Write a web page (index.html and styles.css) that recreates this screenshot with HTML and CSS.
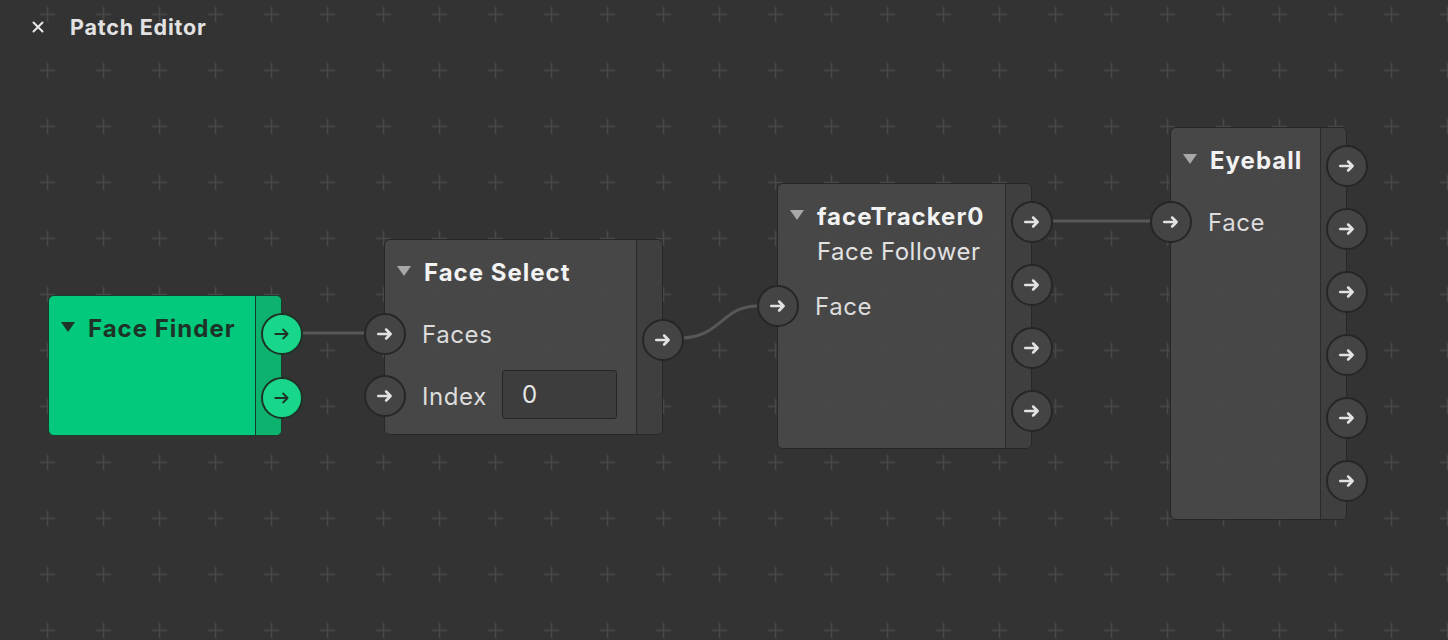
FILE: index.html
```html
<!DOCTYPE html>
<html>
<head>
<meta charset="utf-8">
<link rel="stylesheet" href="styles.css">
</head>
<body>
<div class="canvas">
  <svg class="wires" width="1448" height="640" viewBox="0 0 1448 640">
    <defs>
      <pattern id="plus" x="19" y="42" width="56" height="56" patternUnits="userSpaceOnUse">
        <path d="M21 28.5H36M28.5 21V36" stroke="#474747" stroke-width="1.6"/>
      </pattern>
    </defs>
    <rect width="1448" height="640" fill="url(#plus)"/>
    <path d="M303 333H364" stroke="#575757" stroke-width="3" fill="none"/>
    <path d="M683 338C722 336 722 306 758 306" stroke="#575757" stroke-width="3" fill="none"/>
    <path d="M1052 221H1150" stroke="#575757" stroke-width="3" fill="none"/>
  </svg>

  <section class="node green" style="left:48px;top:295px;width:234px;height:141px">
    <div class="body">
      <div class="title"><span class="tri"></span>Face Finder</div>
    </div>
    <div class="side"></div>
    <div class="outs gap64">
      <span class="port"><svg viewBox="0 0 16 16"><path d="M2 8H13M9 4L13 8L9 12"/></svg></span>
      <span class="port"><svg viewBox="0 0 16 16"><path d="M2 8H13M9 4L13 8L9 12"/></svg></span>
    </div>
  </section>

  <section class="node" style="left:384px;top:239px;width:279px;height:196px">
    <div class="body">
      <div class="title"><span class="tri"></span>Face Select</div>
      <div class="row"><span class="port"><svg viewBox="0 0 16 16"><path d="M2 8H13M9 4L13 8L9 12"/></svg></span><span class="label">Faces</span></div>
      <div class="row"><span class="port"><svg viewBox="0 0 16 16"><path d="M2 8H13M9 4L13 8L9 12"/></svg></span><span class="label">Index</span><span class="field">0</span></div>
    </div>
    <div class="side"></div>
    <div class="outs" style="top:79px">
      <span class="port"><svg viewBox="0 0 16 16"><path d="M2 8H13M9 4L13 8L9 12"/></svg></span>
    </div>
  </section>

  <section class="node" style="left:777px;top:183px;width:255px;height:266px">
    <div class="body">
      <div class="title"><span class="tri"></span>faceTracker0</div>
      <div class="sub">Face Follower</div>
      <div class="row short"><span class="port"><svg viewBox="0 0 16 16"><path d="M2 8H13M9 4L13 8L9 12"/></svg></span><span class="label">Face</span></div>
    </div>
    <div class="side"></div>
    <div class="outs">
      <span class="port"><svg viewBox="0 0 16 16"><path d="M2 8H13M9 4L13 8L9 12"/></svg></span>
      <span class="port"><svg viewBox="0 0 16 16"><path d="M2 8H13M9 4L13 8L9 12"/></svg></span>
      <span class="port"><svg viewBox="0 0 16 16"><path d="M2 8H13M9 4L13 8L9 12"/></svg></span>
      <span class="port"><svg viewBox="0 0 16 16"><path d="M2 8H13M9 4L13 8L9 12"/></svg></span>
    </div>
  </section>

  <section class="node" style="left:1170px;top:127px;width:177px;height:393px">
    <div class="body">
      <div class="title"><span class="tri"></span>Eyeball</div>
      <div class="row"><span class="port"><svg viewBox="0 0 16 16"><path d="M2 8H13M9 4L13 8L9 12"/></svg></span><span class="label">Face</span></div>
    </div>
    <div class="side"></div>
    <div class="outs">
      <span class="port"><svg viewBox="0 0 16 16"><path d="M2 8H13M9 4L13 8L9 12"/></svg></span>
      <span class="port"><svg viewBox="0 0 16 16"><path d="M2 8H13M9 4L13 8L9 12"/></svg></span>
      <span class="port"><svg viewBox="0 0 16 16"><path d="M2 8H13M9 4L13 8L9 12"/></svg></span>
      <span class="port"><svg viewBox="0 0 16 16"><path d="M2 8H13M9 4L13 8L9 12"/></svg></span>
      <span class="port"><svg viewBox="0 0 16 16"><path d="M2 8H13M9 4L13 8L9 12"/></svg></span>
      <span class="port"><svg viewBox="0 0 16 16"><path d="M2 8H13M9 4L13 8L9 12"/></svg></span>
    </div>
  </section>
</div>

<header class="topbar">
  <svg class="close" width="12" height="12" viewBox="0 0 12 12"><path d="M1.5 1.5L10.5 10.5M10.5 1.5L1.5 10.5"/></svg>
  <h1>Patch Editor</h1>
</header>
</body>
</html>
```

FILE: styles.css
```css
html, body {
  margin: 0;
  height: 100%;
}
body {
  background: #333333;
  font-family: Inter, "Noto Sans", "Liberation Sans", sans-serif;
  color: #e4e4e4;
  overflow: hidden;
  position: relative;
}
.topbar {
  position: relative;
  display: flex;
  align-items: center;
  height: 54px;
  padding-left: 32px;
  gap: 26px;
}
.topbar .close path {
  stroke: #e8e8e8;
  stroke-width: 2;
  stroke-linecap: round;
}
.topbar h1 {
  margin: 0;
  font-size: 21.5px;
  font-weight: 700;
  color: #e2e2e2;
  letter-spacing: 0.8px;
}
.canvas {
  position: absolute;
  inset: 0;
}
.wires {
  position: absolute;
  left: 0;
  top: 0;
}
.node {
  position: absolute;
  box-sizing: border-box;
  display: flex;
  background: rgba(72, 72, 72, 0.96);
  border: 1.5px solid #272727;
  border-radius: 6px;
}
.node .body {
  flex: 1;
  display: flex;
  flex-direction: column;
  padding-top: 17px;
}
.node .side {
  width: 25px;
  background: #3f3f3f;
  border-left: 1.5px solid #2a2a2a;
  border-radius: 0 5px 5px 0;
}
.title {
  display: flex;
  align-items: center;
  height: 30px;
  font-size: 24px;
  font-weight: 700;
  letter-spacing: 1px;
  color: #f2f2f2;
  padding-left: 12px;
}
.tri {
  width: 0;
  height: 0;
  border-left: 7.5px solid transparent;
  border-right: 7.5px solid transparent;
  border-top: 10px solid #a8a8a8;
  margin-right: 13px;
  margin-top: -2px;
}
.sub {
  padding-left: 39px;
  font-size: 24px;
  letter-spacing: 0.5px;
  line-height: 30px;
  margin-top: 6px;
  color: #e2e2e2;
}
.row {
  display: flex;
  align-items: center;
  height: 62px;
  margin-left: -21px;
}
.title + .row {
  margin-top: 16px;
}
.sub + .row {
  margin-top: 11px;
  height: 56px;
}
.label {
  font-size: 24px;
  letter-spacing: 0.6px;
  color: #dcdcdc;
  margin-left: 16px;
}
.field {
  box-sizing: border-box;
  width: 115px;
  height: 49px;
  margin-left: 15px;
  margin-top: -3px;
  border: 1.5px solid #262626;
  border-radius: 3px;
  background: #3d3d3d;
  font-size: 24px;
  color: #e6e6e6;
  padding-left: 19px;
  display: flex;
  align-items: center;
}
.outs {
  position: absolute;
  right: -22px;
  top: 17px;
  display: flex;
  flex-direction: column;
  gap: 21px;
}
.outs.gap64 {
  gap: 22px;
}
.port {
  box-sizing: border-box;
  width: 42px;
  height: 42px;
  flex: none;
  border-radius: 50%;
  background: #444444;
  border: 2px solid #262626;
  display: flex;
  align-items: center;
  justify-content: center;
}
.port svg {
  width: 18px;
  height: 18px;
}
.port svg path {
  fill: none;
  stroke: #e2e2e2;
  stroke-width: 2.3;
  stroke-linecap: round;
  stroke-linejoin: round;
}
.node.green {
  background: #02c97b;
  border-color: #1d3b2d;
}
.node.green .side {
  background: #0cb26d;
  border-left-color: #1d3b2d;
}
.node.green .title {
  color: #1e3328;
}
.node.green .tri {
  border-top-color: #1e3328;
}
.node.green .port {
  background: #18d78a;
  border-color: #1e3328;
}
.node.green .port svg path {
  stroke: #1e3328;
  stroke-width: 1.6;
}
```
